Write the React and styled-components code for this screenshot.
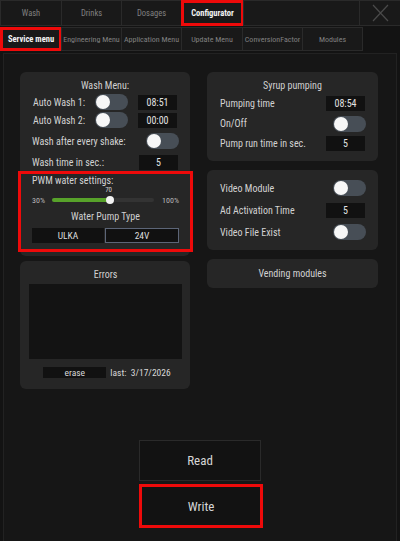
import React from "react";
import styled, { createGlobalStyle, css } from "styled-components";

const GlobalStyle = createGlobalStyle`
  html, body {
    margin: 0;
    padding: 0;
    background: #131313;
  }
  body {
    font-family: "Liberation Sans Narrow", "Roboto Condensed", Roboto, "Liberation Sans", sans-serif;
    color: #d4d4d4;
    -webkit-font-smoothing: antialiased;
  }
`;

const marked = css`
  outline: 3px solid #ee0a0a;
  outline-offset: -3px;
`;

const Screen = styled.div`
  width: 400px;
  height: 541px;
  display: flex;
  flex-direction: column;
  overflow: hidden;
`;

const TabRow = styled.div`
  display: flex;
  height: ${(p) => p.h}px;
  margin-bottom: 1px;
`;

const Tab = styled.div`
  width: ${(p) => p.w}px;
  flex: ${(p) => (p.grow ? 1 : "none")};
  box-sizing: border-box;
  display: flex;
  align-items: center;
  justify-content: center;
  background: #191919;
  border: 1px solid #2a2a2a;
  margin-right: -1px;
  font-size: ${(p) => (p.small ? 8 : 8.5)}px;
  color: ${(p) => (p.active ? "#f4f4f4" : "#808080")};
  font-weight: ${(p) => (p.active ? 700 : 400)};
  white-space: nowrap;
  ${(p) => p.marked && marked}
`;

const Spacer = styled.div`
  flex: 1;
`;

const Frame = styled.div`
  flex: 1;
  margin: 1px 3px 0 3px;
  border: 1px solid #222;
  border-bottom: none;
  background: #161616;
  padding: 18px 0 0 16px;
  display: flex;
  flex-direction: column;
`;

const Columns = styled.div`
  display: flex;
  gap: 17px;
  align-items: flex-start;
`;

const Column = styled.div`
  width: ${(p) => p.w}px;
  display: flex;
  flex-direction: column;
  gap: ${(p) => p.gap}px;
`;

const Panel = styled.div`
  background: #262626;
  border-radius: 6px;
  box-sizing: border-box;
  height: ${(p) => p.h}px;
  padding: ${(p) => p.pad || "0"};
  display: flex;
  flex-direction: column;
  gap: ${(p) => p.gap || 0}px;
`;

const PanelTitle = styled.div`
  font-size: 10px;
  line-height: 12px;
  text-align: center;
  color: #d0d0d0;
  margin-bottom: ${(p) => p.mb || 0}px;
`;

const Row = styled.div`
  height: ${(p) => p.h || 18}px;
  display: flex;
  align-items: center;
  justify-content: space-between;
  font-size: 10px;
  color: #d2d2d2;
  padding: 0 ${(p) => p.pr || 12}px 0 ${(p) => p.pl || 12}px;
  margin-top: ${(p) => p.mt || 0}px;
`;

const LabelGrid = styled.div`
  height: 18px;
  display: grid;
  grid-template-columns: 65px 33px 39px;
  column-gap: 10px;
  align-items: center;
  font-size: 10px;
  color: #d2d2d2;
  & > span {
    text-align: right;
  }
`;

const Track = styled.div`
  width: 33px;
  height: 16px;
  border-radius: 8px;
  background: #474e56;
  position: relative;
  flex: none;
  &::after {
    content: "";
    position: absolute;
    left: 1px;
    top: 1px;
    width: 14px;
    height: 14px;
    border-radius: 50%;
    background: #f7f7f7;
  }
`;

const Field = styled.div`
  width: 39px;
  height: 15px;
  background: #111;
  color: #e2e2e2;
  font-size: 10px;
  display: flex;
  align-items: center;
  justify-content: center;
  flex: none;
`;

const PwmBox = styled.div`
  margin: 1px -3px 0 -2px;
  height: 81px;
  box-sizing: border-box;
  border: 3px solid #ee0a0a;
  padding: 1px 11px 0 11px;
  display: flex;
  flex-direction: column;
`;

const PwmHeading = styled.div`
  font-size: 10px;
  line-height: 12px;
  color: #d2d2d2;
`;

const SliderRow = styled.div`
  height: 18px;
  margin-top: 4px;
  display: flex;
  align-items: center;
  font-size: 8px;
  color: #b8b8b8;
  gap: 7px;
`;

const SliderTrack = styled.div`
  flex: 1;
  height: 4px;
  border-radius: 2px;
  background: #333;
  position: relative;
  margin-right: 1px;
`;

const SliderFill = styled.div`
  height: 100%;
  border-radius: 2px;
  background: #57a22a;
`;

const Knob = styled.div`
  position: absolute;
  top: -2px;
  width: 8px;
  height: 8px;
  border-radius: 50%;
  background: #f2f2f2;
  transform: translateX(-4px);
`;

const KnobLabel = styled.span`
  position: absolute;
  top: -10px;
  left: -1px;
  font-size: 7px;
  color: #cfcfcf;
`;

const PumpTitle = styled(PanelTitle)`
  margin-top: 2px;
`;

const Segments = styled.div`
  margin-top: 5px;
  height: 15px;
  display: grid;
  grid-template-columns: 72px 1fr;
  gap: 1px;
`;

const Segment = styled.div`
  background: #111;
  box-sizing: border-box;
  border: 1px solid ${(p) => (p.selected ? "#5c6577" : "#111")};
  display: flex;
  align-items: center;
  justify-content: center;
  font-size: 9.5px;
  color: #dedede;
`;

const ErrorLog = styled.div`
  height: 75px;
  margin: 3px 0 0 0;
  background: #131313;
`;

const ErrorFooter = styled.div`
  margin-top: 8px;
  padding-left: 3px;
  display: flex;
  align-items: center;
  justify-content: center;
  gap: 4px;
  font-size: 9.5px;
  color: #d8d8d8;
`;

const EraseBtn = styled.div`
  width: 63px;
  height: 11px;
  background: #111;
  display: flex;
  align-items: center;
  justify-content: center;
`;

const CenterText = styled.div`
  flex: 1;
  display: flex;
  align-items: center;
  justify-content: center;
  font-size: 10px;
  color: #d2d2d2;
`;

const Actions = styled.div`
  margin-top: 51px;
  display: flex;
  flex-direction: column;
  align-items: center;
  gap: 3px;
  margin-left: -16px;
`;

const ActionButton = styled.div`
  width: ${(p) => (p.marked ? 124 : 122)}px;
  height: ${(p) => (p.marked ? 44 : 41)}px;
  box-sizing: border-box;
  background: #121212;
  border: ${(p) => (p.marked ? "3px solid #ee0a0a" : "1px solid #2a2a2a")};
  display: flex;
  align-items: center;
  justify-content: center;
  font-size: 13px;
  color: #d6d6d6;
  margin-left: ${(p) => (p.marked ? 2 : 0)}px;
`;

const CloseIcon = () => (
  <svg width="17" height="18" viewBox="0 0 17 18">
    <path d="M1 1 L16 17 M16 1 L1 17" stroke="#4a4a4a" strokeWidth="1.2" fill="none" />
  </svg>
);

const Toggle = () => <Track />;

export default function App() {
  return (
    <Screen>
      <GlobalStyle />
      <TabRow h={26}>
        <Tab w={62}>Wash</Tab>
        <Tab w={61}>Drinks</Tab>
        <Tab w={61}>Dosages</Tab>
        <Tab w={63} active marked>Configurator</Tab>
        <Tab grow>{""}</Tab>
        <Tab w={42}>
          <CloseIcon />
        </Tab>
      </TabRow>
      <TabRow h={24}>
        <Tab w={62} active marked>Service menu</Tab>
        <Tab w={61} small>Engineering Menu</Tab>
        <Tab w={61} small>Application Menu</Tab>
        <Tab w={62} small>Update Menu</Tab>
        <Tab w={61} small>ConversionFactor</Tab>
        <Tab w={61} small>Modules</Tab>
        <Spacer />
      </TabRow>
      <Frame>
        <Columns>
          <Column w={170} gap={5}>
            <Panel h={184} pad="8px 0 0 0">
              <PanelTitle mb={1}>Wash Menu:</PanelTitle>
              <LabelGrid>
                <span>Auto Wash 1:</span>
                <Toggle />
                <Field>08:51</Field>
              </LabelGrid>
              <LabelGrid>
                <span>Auto Wash 2:</span>
                <Toggle />
                <Field>00:00</Field>
              </LabelGrid>
              <Row mt={3} pr={11}>
                <span>Wash after every shake:</span>
                <Toggle />
              </Row>
              <Row mt={4} h={16}>
                <span>Wash time in sec.:</span>
                <Field>5</Field>
              </Row>
              <PwmBox>
                <PwmHeading>PWM water settings:</PwmHeading>
                <SliderRow>
                  <span>30%</span>
                  <SliderTrack>
                    <SliderFill style={{ width: "57%" }} />
                    <Knob style={{ left: "57%" }}>
                      <KnobLabel>70</KnobLabel>
                    </Knob>
                  </SliderTrack>
                  <span>100%</span>
                </SliderRow>
                <PumpTitle>Water Pump Type</PumpTitle>
                <Segments>
                  <Segment>ULKA</Segment>
                  <Segment selected>24V</Segment>
                </Segments>
              </PwmBox>
            </Panel>
            <Panel h={128} pad="8px 8px 0 9px">
              <PanelTitle>Errors</PanelTitle>
              <ErrorLog />
              <ErrorFooter>
                <EraseBtn>erase</EraseBtn>
                <span>last:&nbsp; 3/17/2026</span>
              </ErrorFooter>
            </Panel>
          </Column>
          <Column w={171} gap={9}>
            <Panel h={89} pad="8px 0 0 0" gap={1}>
              <PanelTitle mb={1}>Syrup pumping</PanelTitle>
              <Row h={19} pl={13} pr={13}>
                <span>Pumping time</span>
                <Field>08:54</Field>
              </Row>
              <Row h={19} pl={13}>
                <span>On/Off</span>
                <Toggle />
              </Row>
              <Row h={19} pl={13} pr={13}>
                <span>Pump run time in sec.</span>
                <Field>5</Field>
              </Row>
            </Panel>
            <Panel h={80} pad="8px 0 0 0" gap={2}>
              <Row h={20} pl={13}>
                <span>Video Module</span>
                <Toggle />
              </Row>
              <Row h={20} pl={13} pr={13}>
                <span>Ad Activation Time</span>
                <Field>5</Field>
              </Row>
              <Row h={20} pl={13}>
                <span>Video File Exist</span>
                <Toggle />
              </Row>
            </Panel>
            <Panel h={29}>
              <CenterText>Vending modules</CenterText>
            </Panel>
          </Column>
        </Columns>
        <Actions>
          <ActionButton>Read</ActionButton>
          <ActionButton marked>Write</ActionButton>
        </Actions>
      </Frame>
    </Screen>
  );
}
